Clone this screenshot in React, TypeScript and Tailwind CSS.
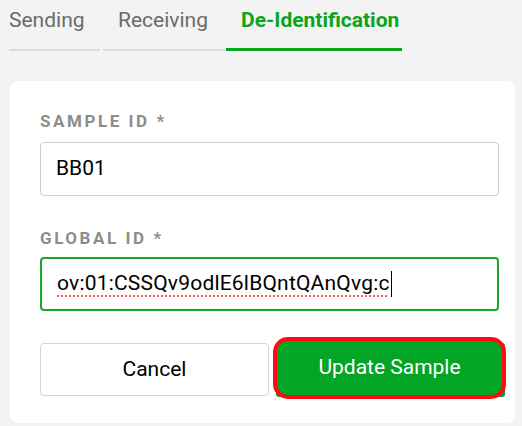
import React from "react";

export default function App() {
  return (
    <div className="w-[522px] h-[426px] overflow-hidden bg-[#f3f3f3] relative" style={{ fontFamily: "Roboto, 'Liberation Sans', sans-serif" }}>
      <div className="flex items-end pl-[9px] pt-[6px] h-[51px]">
        <div className="w-[91px] h-full flex flex-col border-b-2 border-[#dcdcdc]">
          <span className="text-[21px] leading-[28px] text-[#6b6b6b]">Sending</span>
        </div>
        <div className="ml-[3px] w-[122px] h-full flex flex-col border-b-2 border-[#dcdcdc] pl-[15px]">
          <span className="text-[21px] leading-[28px] text-[#6b6b6b]">Receiving</span>
        </div>
        <div className="ml-[1px] w-[176px] h-full flex flex-col border-b-[3px] border-[#0aa51f] pl-[15px]">
          <span className="text-[21px] leading-[28px] font-bold text-[#0aa51f] whitespace-nowrap">De-Identification</span>
        </div>
      </div>
      <div className="ml-[10px] mt-[30px] w-[505px] h-[342px] bg-white rounded-[8px] pt-[29px] pl-[30px]">
        <div className="text-[17px] leading-[22px] font-bold tracking-[0.15em] text-[#8c8c8c]">SAMPLE ID *</div>
        <div className="mt-[10px] w-[459px] h-[54px] border border-[#cfcfcf] rounded-[4px] flex items-center pl-[15px] text-[21px] text-black">
          BB01
        </div>
        <div className="mt-[31px] text-[17px] leading-[22px] font-bold tracking-[0.15em] text-[#8c8c8c]">GLOBAL ID *</div>
        <div className="mt-[8px] w-[459px] h-[54px] border-2 border-[#1aa82a] rounded-[4px] flex items-center pl-[15px] text-[21px] text-black">
          <span className="underline decoration-dotted decoration-[#ff5a5a] decoration-2 underline-offset-[5px] whitespace-nowrap tracking-[0.2px]">ov:01:CSSQv9odlE6lBQntQAnQvg:c</span>
          <span className="w-[1.5px] h-[26px] bg-black ml-[1px] shrink-0" />
        </div>
        <div className="mt-[32px] flex">
          <button className="shrink-0 w-[229px] h-[53px] border border-[#d4d4d4] rounded-[4px] bg-white text-[21px] text-black">Cancel</button>
          <div className="relative shrink-0 ml-[7px] w-[229px] h-[54px]">
            <div className="absolute inset-0 bg-[#02a525] rounded-[3px]" />
            <div className="absolute left-[-3px] top-[-6px] right-[-1px] bottom-[-2px] rounded-[15px] border-[4px] border-[#ff0c12] bg-[#02a525] flex items-center justify-center">
              <span className="text-[21px] text-white">Update Sample</span>
            </div>
          </div>
        </div>
      </div>
    </div>
  );
}
